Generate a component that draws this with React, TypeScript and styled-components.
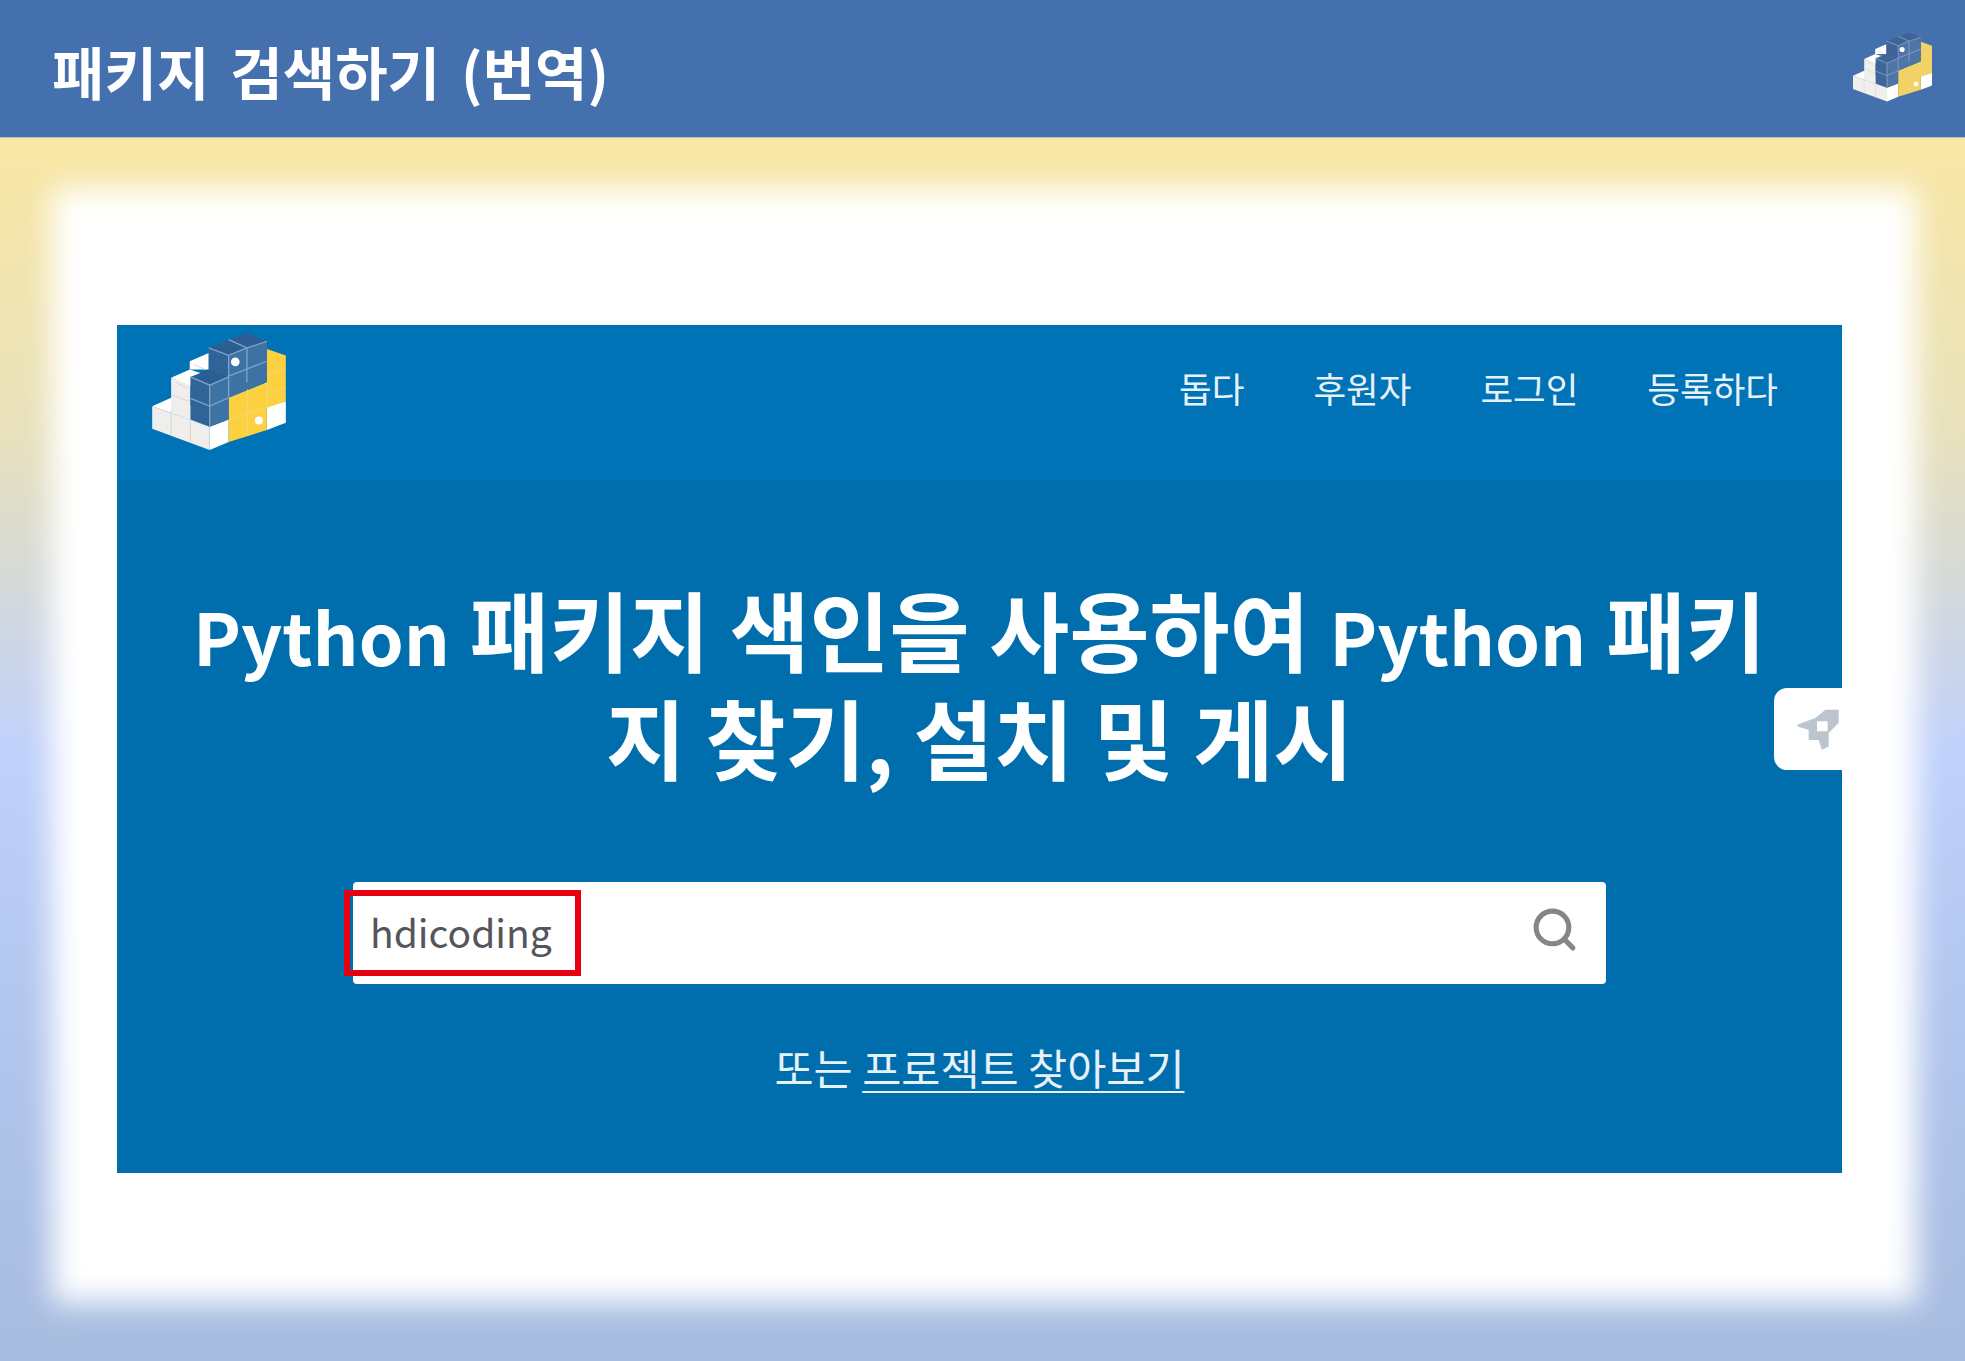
import React from 'react';
import styled, { createGlobalStyle } from 'styled-components';
import { Search } from 'lucide-react';

const GlobalStyle = createGlobalStyle`
  html, body {
    margin: 0;
    padding: 0;
    background: #fff;
  }
  * {
    box-sizing: border-box;
  }
`;

const FONT = '"Noto Sans CJK KR", "Noto Sans", sans-serif';

const Slide = styled.div`
  width: 1965px;
  height: 1361px;
  display: flex;
  flex-direction: column;
  overflow: hidden;
  font-family: ${FONT};
`;

const TitleBar = styled.header`
  height: 138px;
  flex: none;
  display: flex;
  align-items: center;
  justify-content: space-between;
  padding: 0 33px 0 52px;
  background: #4570ae;
  border-bottom: 1px solid #b9bdb8;
`;

const SlideTitle = styled.h1`
  margin: 3px 0 0;
  font-size: 57px;
  font-weight: 700;
  word-spacing: 8px;
  color: #fff;
`;

const TitleLogo = styled.div`
  display: flex;
  margin-top: -3px;
`;

const SlideBody = styled.main`
  flex: 1;
  padding: 50px 48px 58px 52px;
  display: flex;
  background: linear-gradient(
    180deg,
    #f9e7a4 0%,
    #e8e1bb 24%,
    #c0d1fb 50%,
    #b2c6ee 72%,
    #a7bcdf 100%
  );
`;

const WhiteSheet = styled.section`
  position: relative;
  flex: 1;
  padding: 137px 75px 0 65px;

  &::before {
    content: '';
    position: absolute;
    inset: 0;
    background: #fff;
    filter: blur(15px);
  }
`;

const SitePanel = styled.div`
  position: relative;
  height: 848px;
  display: flex;
  flex-direction: column;
  color: #fff;
`;

const SiteNav = styled.nav`
  height: 155px;
  flex: none;
  display: flex;
  align-items: center;
  justify-content: space-between;
  padding: 0 64px 0 35px;
  background: #0073b7;
`;

const SiteLogo = styled.div`
  display: flex;
  margin-top: -22px;
`;

const NavLinks = styled.div`
  display: flex;
  gap: 69px;
  margin-top: -31px;
`;

const NavLink = styled.a`
  font-size: 35.5px;
  color: #e6f1f8;
`;

const Hero = styled.div`
  flex: 1;
  display: flex;
  flex-direction: column;
  align-items: center;
  padding-top: 94px;
  background: #006dad;
`;

const HeroTitle = styled.h2`
  margin: 0;
  font-size: 87px;
  line-height: 108px;
  font-weight: 600;
  text-align: center;
  white-space: nowrap;
`;

const Latin = styled.span`
  font-size: 72px;
  line-height: 1;
`;

const SearchBox = styled.div`
  position: relative;
  width: 1253px;
  height: 102px;
  margin-top: 92px;
  display: flex;
  align-items: center;
  justify-content: space-between;
  padding: 0 27px 4px 17px;
  background: #fff;
  border-radius: 4px;
`;

const SearchText = styled.span`
  font-size: 39px;
  color: #55555c;
`;

const SearchIcon = styled(Search)`
  margin-top: -4px;
`;

const Highlight = styled.div`
  position: absolute;
  left: -9px;
  top: 8px;
  width: 237px;
  height: 86px;
  border: 6px solid #e60012;
`;

const BrowseLine = styled.p`
  margin: 53px 0 0;
  font-size: 42.5px;
  line-height: 60px;
  color: #e6f1f8;
`;

const BrowseLink = styled.a`
  text-decoration: underline;
  text-underline-offset: 6px;
  text-decoration-thickness: 2px;
`;

const SideTab = styled.div`
  position: absolute;
  right: 0;
  top: 363px;
  width: 68px;
  height: 82px;
  display: flex;
  align-items: center;
  padding-left: 23px;
  background: #fff;
  border-radius: 13px 0 0 13px;
`;

const palettes = {
  site: {
    blueLeft: '#2f6498',
    blueRight: '#3d72a5',
    blueTop: '#2a5d92',
    yellow: '#fdd040',
    whiteLeft: '#efeeec',
    line: '#7fa3c4',
  },
  title: {
    blueLeft: '#3f6497',
    blueRight: '#4f74a8',
    blueTop: '#3f6497',
    yellow: '#f2d264',
    whiteLeft: '#f0efec',
    line: '#8ea6c8',
  },
};

const Logo: React.FC<{ width: number; height: number; kind: 'site' | 'title' }> = ({
  width,
  height,
  kind,
}) => {
  const c = palettes[kind];
  return (
    <svg width={width} height={height} viewBox="125 40 402 352">
      <polygon points="125,260 182,235 298,280 298,322" fill="#fff" />
      <polygon points="182,175 238,150 300,170 240,200" fill="#fff" />
      <polygon points="238,125 295,100 330,115 295,150 238,150" fill="#fff" />
      <polygon points="125,260 298,322 298,392 125,328" fill={c.whiteLeft} />
      <polygon points="182,175 240,197 240,300 182,280" fill={c.whiteLeft} />
      <polygon points="298,322 355,300 355,368 298,392" fill="#fff" />
      <polygon points="470,262 527,245 527,310 470,332" fill="#fff" />
      <polygon
        points="470,88 527,108 527,245 470,265 470,332 355,368 355,235 470,188"
        fill={c.yellow}
      />
      <polygon points="295,85 355,60 410,40 470,65 470,185 355,235 355,172 295,150" fill={c.blueRight} />
      <polygon points="295,85 355,60 410,40 470,65 410,85 355,107" fill={c.blueTop} />
      <polygon points="295,85 355,107 355,172 295,150" fill={c.blueLeft} />
      <polygon points="240,172 295,150 355,172 298,197" fill={c.blueTop} />
      <polygon points="298,197 355,172 355,300 298,322" fill={c.blueRight} />
      <polygon points="240,172 298,197 298,322 240,300" fill={c.blueLeft} />
      <g fill="none" stroke={c.line} strokeWidth="4">
        <path d="M295 85 L355 107 L410 85 L470 65 M355 60 L410 85 M410 85 V188 M355 107 V235 M355 170 L470 125" />
        <path d="M240 172 L298 197 L355 172 M298 197 V322 M240 237 L298 260 L355 235" />
      </g>
      <g fill="none" stroke="#f2d77c" strokeWidth="3">
        <path d="M412 210 V345 M470 188 V265 M355 300 L470 262 M470 165 L527 145 M470 225 L527 205" />
      </g>
      <g fill="none" stroke="#d9d7d3" strokeWidth="3">
        <path d="M182 270 V345 M240 300 V368 M182 225 L240 248 M198 190 L230 205 M250 135 L285 150" />
      </g>
      <circle cx="375" cy="127" r="13" fill="#fff" />
      <circle cx="446" cy="303" r="12" fill="#fff" />
    </svg>
  );
};

const RocketIcon: React.FC = () => (
  <svg width="42" height="42" viewBox="170 150 126 126">
    <path
      fillRule="evenodd"
      fill="#bcc5cd"
      d="M170 200 L225 180 L255 155 H295 V195 L265 225 V265 L245 276 L235 246 H205 V215 L175 207 Z M230 190 V220 H262 V190 Z"
    />
  </svg>
);

export default function App() {
  return (
    <Slide>
      <GlobalStyle />
      <TitleBar>
        <SlideTitle>패키지 검색하기 (번역)</SlideTitle>
        <TitleLogo>
          <Logo width={79} height={70} kind="title" />
        </TitleLogo>
      </TitleBar>
      <SlideBody>
        <WhiteSheet>
          <SitePanel>
            <SiteNav>
              <SiteLogo>
                <Logo width={134} height={117} kind="site" />
              </SiteLogo>
              <NavLinks>
                <NavLink>돕다</NavLink>
                <NavLink>후원자</NavLink>
                <NavLink>로그인</NavLink>
                <NavLink>등록하다</NavLink>
              </NavLinks>
            </SiteNav>
            <Hero>
              <HeroTitle>
                <Latin>Python</Latin> 패키지 색인을 사용하여 <Latin>Python</Latin> 패키
                <br />
                지 찾기, 설치 및 게시
              </HeroTitle>
              <SearchBox>
                <SearchText>hdicoding</SearchText>
                <SearchIcon size={49} color="#85858a" strokeWidth={2.5} />
                <Highlight />
              </SearchBox>
              <BrowseLine>
                또는 <BrowseLink>프로젝트 찾아보기</BrowseLink>
              </BrowseLine>
            </Hero>
            <SideTab>
              <RocketIcon />
            </SideTab>
          </SitePanel>
        </WhiteSheet>
      </SlideBody>
    </Slide>
  );
}
